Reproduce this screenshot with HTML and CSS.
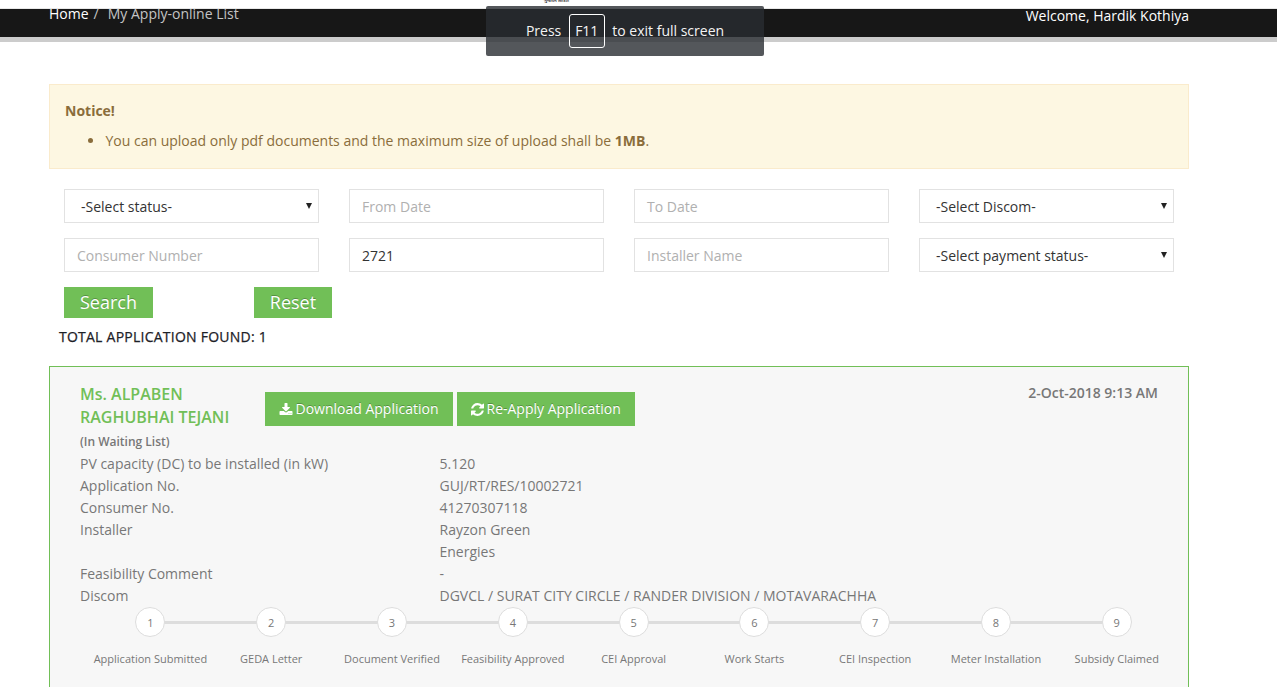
FILE: index.html
```html
<!DOCTYPE html>
<html lang="en">
<head>
<meta charset="utf-8">
<title>My Apply-online List</title>
<link rel="stylesheet" href="styles.css">
</head>
<body>
<div class="masthead"><span class="logo-caption">ગુજરાત સરકાર</span></div>
<header class="page-header">
  <div class="container header-inner">
    <nav class="breadcrumb"><a class="crumb-home">Home</a><span class="crumb-sep">/</span><span>My Apply-online List</span></nav>
    <span class="welcome">Welcome, Hardik Kothiya</span>
  </div>
</header>
<div class="fullscreen-toast"><span>Press</span><kbd class="key">F11</kbd><span>to exit full screen</span></div>
<main class="container">
  <section class="notice">
    <strong class="notice-title">Notice!</strong>
    <ul class="notice-list"><li>You can upload only pdf documents and the maximum size of upload shall be <b>1MB</b>.</li></ul>
  </section>
  <form class="filters">
    <div class="field select"><span>-Select status-</span><svg class="caret" viewBox="0 0 6 6"><path d="M0 0h6L3 6z"/></svg></div>
    <div class="field placeholder">From Date</div>
    <div class="field placeholder">To Date</div>
    <div class="field select"><span>-Select Discom-</span><svg class="caret" viewBox="0 0 6 6"><path d="M0 0h6L3 6z"/></svg></div>
    <div class="field placeholder">Consumer Number</div>
    <div class="field">2721</div>
    <div class="field placeholder">Installer Name</div>
    <div class="field select"><span>-Select payment status-</span><svg class="caret" viewBox="0 0 6 6"><path d="M0 0h6L3 6z"/></svg></div>
  </form>
  <div class="actions"><div class="action-cell"><button class="btn">Search</button></div><button class="btn btn-reset">Reset</button></div>
  <h4 class="total">TOTAL APPLICATION FOUND: 1</h4>
  <article class="card">
    <div class="card-head">
      <div class="applicant"><h3 class="name">Ms. ALPABEN RAGHUBHAI TEJANI</h3><div class="waiting">(In Waiting List)</div></div>
      <div class="card-buttons">
        <a class="btn-app btn-download"><svg class="icon" viewBox="0 0 1664 1664"><path d="M1280 1344q0-26-19-45t-45-19-45 19-19 45 19 45 45 19 45-19 19-45zm256 0q0-26-19-45t-45-19-45 19-19 45 19 45 45 19 45-19 19-45zm128-224v320q0 40-28 68t-68 28H96q-40 0-68-28t-28-68v-320q0-40 28-68t68-28h465l135 136q58 56 136 56t136-56l136-136h464q40 0 68 28t28 68zm-325-569q17 41-14 70L877 1069q-18 19-45 19t-45-19L339 621q-31-29-14-70 17-39 59-39h256V64q0-26 19-45t45-19h256q26 0 45 19t19 45v448h256q42 0 59 39z"/></svg>Download Application</a>
        <a class="btn-app btn-reapply"><svg class="icon icon-refresh" viewBox="0 0 1536 1536"><path d="M1511 928q0 5-1 7-64 268-268 434.500T764 1536q-146 0-282.500-55T238 1324l-129 129q-19 19-45 19t-45-19-19-45V960q0-26 19-45t45-19h448q26 0 45 19t19 45-19 45l-137 137q71 66 161 102t187 36q134 0 250-65t186-179q11-17 53-117 8-23 30-23h192q13 0 22.500 9.500t9.500 22.500zm25-800v448q0 26-19 45t-45 19h-448q-26 0-45-19t-19-45 19-45l138-138Q969 256 768 256q-134 0-250 65T332 500q-11 17-53 117-8 23-30 23H50q-13 0-22.500-9.500T18 608v-7q65-268 270-434.500T768 0q146 0 284 55.500T1297 212l130-129q19-19 45-19t45 19 19 45z"/></svg>Re-Apply Application</a>
      </div>
      <time class="date">2-Oct-2018 9:13 AM</time>
    </div>
    <dl class="details">
      <dt>PV capacity (DC) to be installed (in kW)</dt><dd>5.120</dd>
      <dt>Application No.</dt><dd>GUJ/RT/RES/10002721</dd>
      <dt>Consumer No.</dt><dd>41270307118</dd>
      <dt>Installer</dt><dd>Rayzon Green<br>Energies</dd>
      <dt>Feasibility Comment</dt><dd>-</dd>
      <dt>Discom</dt><dd>DGVCL / SURAT CITY CIRCLE / RANDER DIVISION / MOTAVARACHHA</dd>
    </dl>
    <ol class="steps">
      <li class="step"><span class="dot">1</span><span>Application Submitted</span></li>
      <li class="step"><span class="dot">2</span><span>GEDA Letter</span></li>
      <li class="step"><span class="dot">3</span><span>Document Verified</span></li>
      <li class="step"><span class="dot">4</span><span>Feasibility Approved</span></li>
      <li class="step"><span class="dot">5</span><span>CEI Approval</span></li>
      <li class="step"><span class="dot">6</span><span>Work Starts</span></li>
      <li class="step"><span class="dot">7</span><span>CEI Inspection</span></li>
      <li class="step"><span class="dot">8</span><span>Meter Installation</span></li>
      <li class="step"><span class="dot">9</span><span>Subsidy Claimed</span></li>
    </ol>
  </article>
</main>
</body>
</html>
```
FILE: styles.css
```css
* { box-sizing: border-box; }
html { height: 100%; overflow: hidden; }
body { margin: 0; height: 687px; overflow: hidden; background: #fff; color: #777; font: 14px/22px "Open Sans", sans-serif; }
.container { width: 1140px; margin-left: 49px; }
.masthead { display: flex; height: 9px; overflow: hidden; border-bottom: 1px solid #e8e8e8; }
.logo-caption { margin: -3px 0 0 544px; color: #222; font-size: 4px; line-height: 7px; font-weight: 700; }
.page-header { height: 33px; overflow: hidden; background: #171717; border-bottom: 5px solid #ccc; }
.header-inner { display: flex; justify-content: space-between; height: 28px; align-items: flex-start; }
.breadcrumb { display: flex; margin-top: -6px; color: #c4c4c4; }
.crumb-home { color: #fff; }
.crumb-sep { margin: 0 9px 0 5px; }
.welcome { margin-top: -4px; color: #fff; }
.fullscreen-toast { position: absolute; left: 486px; top: 6px; width: 278px; height: 50px; display: flex; justify-content: center; align-items: center; gap: 7.5px; border-radius: 2px; background: rgba(41, 45, 50, .8); color: #f4f4f4; font-size: 14px; }
.key { width: 36px; height: 34px; border: 1px solid #fff; border-radius: 3px; font: inherit; line-height: 32px; text-align: center; }
.notice { height: 85px; margin-top: 42px; padding: 15px; border: 1px solid #faebcc; background: #fdf7e2; color: #8a6d3b; }
.notice-title { display: block; }
.notice-list { margin: 8px 0 0; padding-left: 40px; }
.notice-list li { padding-left: .5px; }
.filters { display: grid; grid-template-columns: repeat(4, 255px); gap: 15px 30px; padding: 20px 15px 0; }
.field { height: 34px; padding: 1px 12px 0; border: 1px solid #e2e2e2; color: #333; line-height: 32px; white-space: nowrap; }
.placeholder { color: #b0b0b0; }
.select { display: flex; justify-content: space-between; padding: 1px 6px 0 16px; }
.caret { width: 6px; height: 6px; margin-top: 12px; fill: #222; }
.actions { display: flex; padding: 15px 15px 0; }
.action-cell { width: 190px; }
.btn { display: block; width: 89px; height: 31px; padding: 0; border: 0; background: #71bf57; color: #fff; font: 18px/31px "Open Sans", sans-serif; text-shadow: 0 -1px 0 rgba(0, 0, 0, .25); }
.btn-reset { width: 78px; }
.total { margin: 8px 0 0 10px; color: #1d2127; font-size: 14px; font-weight: 500; line-height: 22px; letter-spacing: .24px; -webkit-text-stroke: .25px #1d2127; }
.card { height: 330px; margin-top: 18px; padding: 15px 30px 0; border: 1px solid #71bf57; background: #f7f7f7; }
.card-head { display: flex; height: 71px; }
.applicant { width: 185px; }
.name { margin: 1px 0 0; color: #71bf57; font-size: 16px; font-weight: 600; line-height: 23px; }
.waiting { margin-top: 2px; font-size: 12px; font-weight: 600; line-height: 22px; }
.card-buttons { display: flex; gap: 4px; padding-top: 10px; }
.btn-app { display: flex; align-items: center; height: 34px; padding-left: 13.5px; background: #71bf57; color: #fff; white-space: nowrap; text-shadow: 0 -1px 0 rgba(0, 0, 0, .25); }
.btn-download { width: 188px; }
.btn-reapply { width: 178px; }
.icon { width: 14px; height: 13px; margin-right: 3px; fill: #fff; }
.icon-refresh { width: 13px; }
.date { margin-left: auto; font-weight: 600; }
.details { display: grid; grid-template-columns: 359.5px 1fr; margin: 0; }
.details dd { margin: 0; }
.steps { display: grid; grid-template-columns: repeat(9, 120.8px); margin: 0 0 0 10px; padding: 0; list-style: none; font-size: 11px; text-align: center; }
.step { position: relative; display: flex; flex-direction: column; align-items: center; gap: 11px; white-space: nowrap; }
.step:not(:last-child)::before { content: ""; position: absolute; left: 50%; top: 14px; width: 100%; height: 3px; background: #ddd; }
.dot { position: relative; z-index: 1; width: 30px; height: 30px; border: 1px solid #ddd; border-radius: 50%; background: #fff; line-height: 29px; }
.step + .step .dot { z-index: 2; }
```
